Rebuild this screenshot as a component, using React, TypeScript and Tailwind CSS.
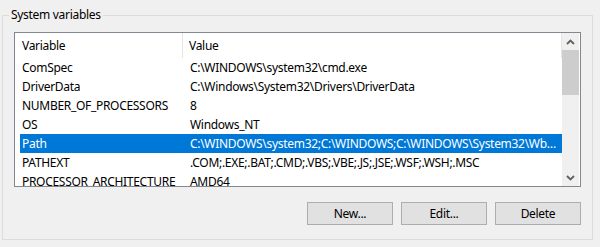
const rows = [
  { name: "ComSpec", value: "C:\\WINDOWS\\system32\\cmd.exe" },
  { name: "DriverData", value: "C:\\Windows\\System32\\Drivers\\DriverData" },
  { name: "NUMBER_OF_PROCESSORS", value: "8" },
  { name: "OS", value: "Windows_NT" },
  {
    name: "Path",
    value:
      "C:\\WINDOWS\\system32;C:\\WINDOWS;C:\\WINDOWS\\System32\\Wbem;C:\\WINDOWS\\System32\\WindowsPowerShell\\v1.0\\",
    selected: true,
  },
  { name: "PATHEXT", value: ".COM;.EXE;.BAT;.CMD;.VBS;.VBE;.JS;.JSE;.WSF;.WSH;.MSC" },
  { name: "PROCESSOR_ARCHITECTURE", value: "AMD64" },
];

function Chevron({ down }: { down?: boolean }) {
  return (
    <svg width="9" height="6" viewBox="0 0 9 6" className={down ? "rotate-180" : ""}>
      <polyline points="1,5 4.5,1.5 8,5" fill="none" stroke="#606060" strokeWidth="1.8" />
    </svg>
  );
}

function Button({ label }: { label: string }) {
  return (
    <button className="h-[23px] w-[86px] border border-[#adadad] bg-[#e1e1e1] text-[12px] leading-none text-black">
      {label}
    </button>
  );
}

export default function App() {
  return (
    <div
      className="h-[247px] w-[600px] overflow-hidden bg-[#f0f0f0] pl-[2px] pt-[15px] text-[12px] tracking-[-0.3px] text-black"
      style={{ fontFamily: '"Segoe UI", "Noto Sans", sans-serif' }}
    >
      <div className="relative h-[225px] w-[591px] border border-[#dcdcdc] pl-[11px] pt-[16px]">
        <span className="absolute -top-[9px] left-[6px] bg-[#f0f0f0] px-[2px] leading-[16px]">
          System variables
        </span>

        <div className="flex h-[155px] w-[567px] border border-[#828790] bg-white">
          <div className="w-[547px] overflow-hidden pl-[5px]">
            <div className="flex h-[25px] items-center">
              <div className="flex h-full w-[163px] items-center border-r border-[#e5e5e5] pl-[2px]">
                Variable
              </div>
              <div className="flex h-full flex-1 items-center border-r border-[#e5e5e5] pl-[6px]">
                Value
              </div>
            </div>
            {rows.map((r) => (
              <div
                key={r.name}
                className={`flex h-[19px] items-center ${r.selected ? "bg-[#0078d7] text-white" : ""}`}
              >
                <div className="w-[164px] shrink-0 truncate pl-[2px]">{r.name}</div>
                <div className="min-w-0 flex-1 truncate pl-[6px] pr-[4px]">{r.value}</div>
              </div>
            ))}
          </div>
          <div className="flex w-[17px] flex-col bg-[#f0f0f0]">
            <div className="flex h-[17px] items-center justify-center">
              <Chevron />
            </div>
            <div className="h-[45px] bg-[#cdcdcd]" />
            <div className="flex-1" />
            <div className="flex h-[17px] items-center justify-center">
              <Chevron down />
            </div>
          </div>
        </div>

        <div className="mt-[15px] flex w-[567px] justify-end gap-[8px]">
          <Button label="New..." />
          <Button label="Edit..." />
          <Button label="Delete" />
        </div>
      </div>
    </div>
  );
}
